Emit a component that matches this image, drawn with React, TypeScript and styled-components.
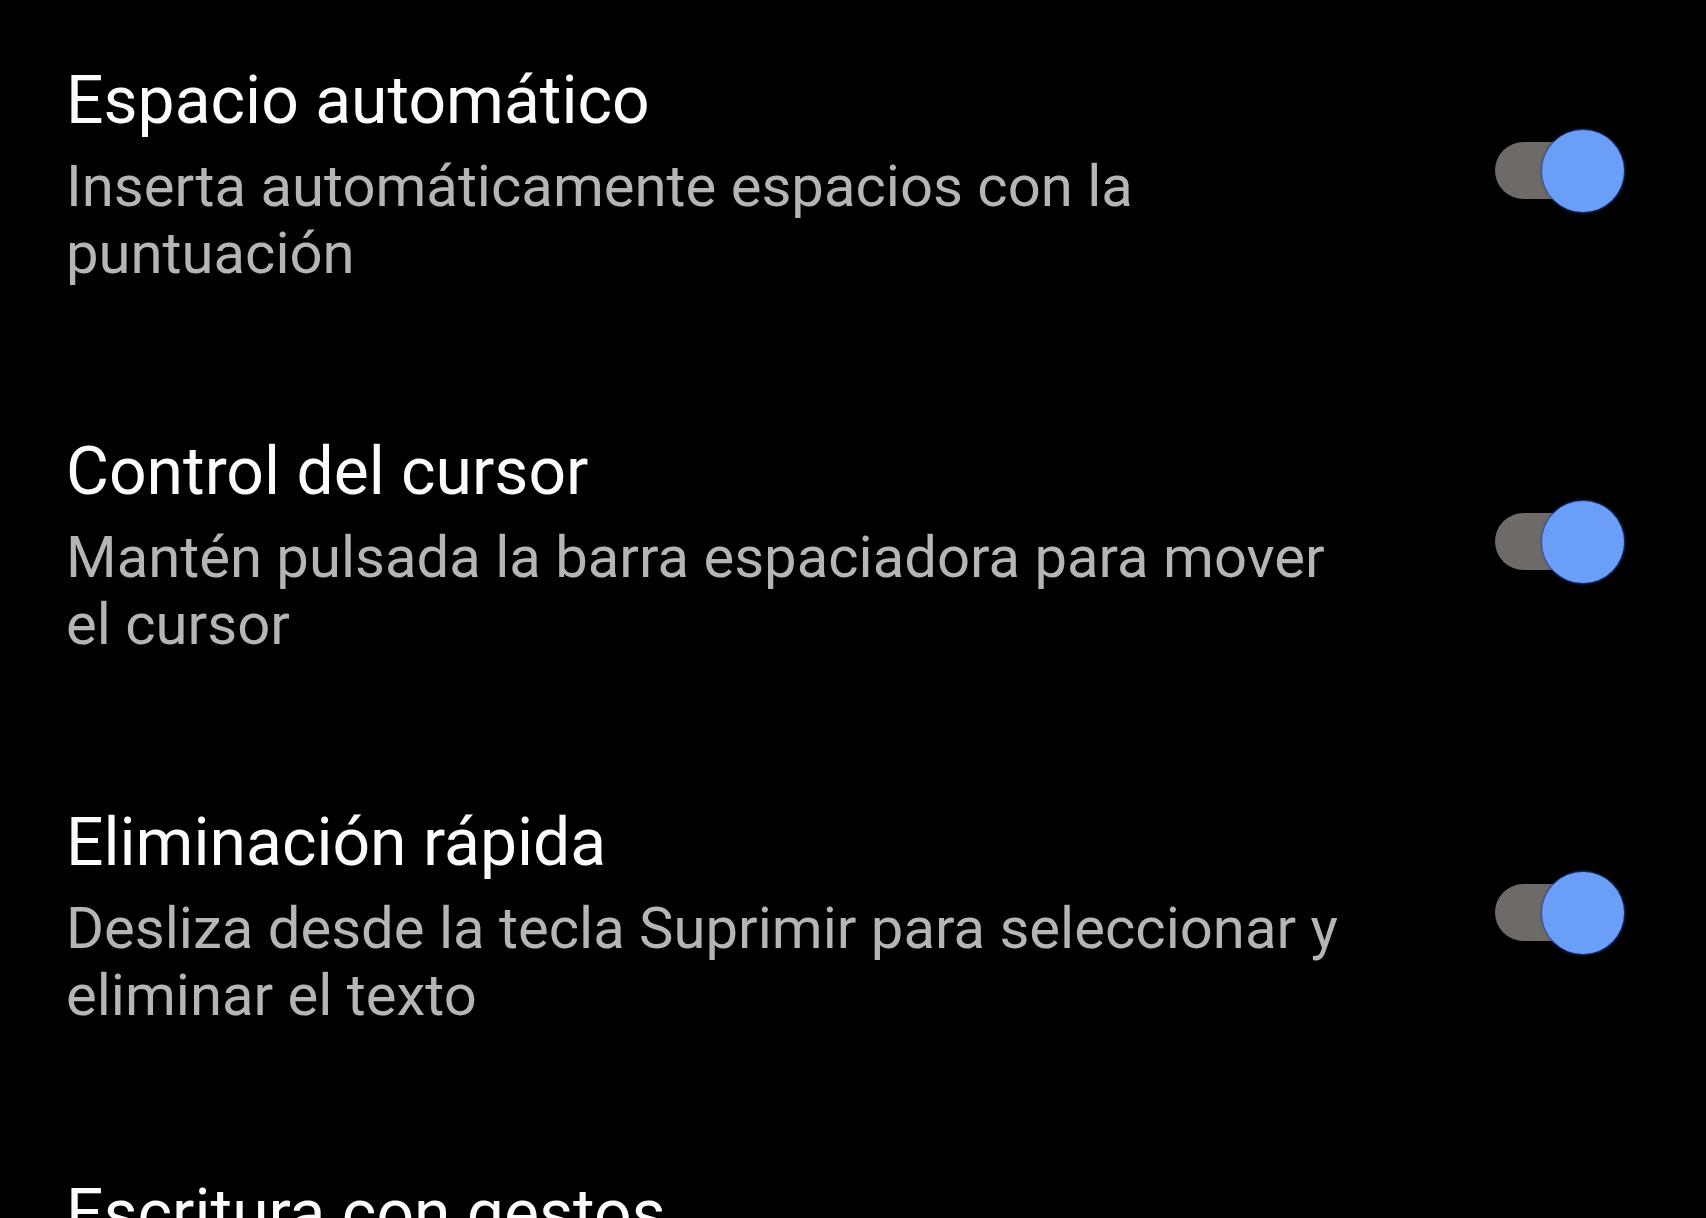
import React from "react";
import styled, { createGlobalStyle } from "styled-components";

const GlobalStyle = createGlobalStyle`
  html, body {
    margin: 0;
    padding: 0;
    background: #000;
  }
  body {
    font-family: Roboto, "Noto Sans", sans-serif;
    overflow: hidden;
  }
`;

const settings = [
  {
    title: "Espacio automático",
    desc: "Inserta automáticamente espacios con la puntuación",
    on: true,
  },
  {
    title: "Control del cursor",
    desc: "Mantén pulsada la barra espaciadora para mover el cursor",
    on: true,
  },
  {
    title: "Eliminación rápida",
    desc: "Desliza desde la tecla Suprimir para seleccionar y eliminar el texto",
    on: true,
  },
  {
    title: "Escritura con gestos",
    desc: "Desliza el dedo por las letras para escribir",
    on: true,
  },
];

export default function App() {
  return (
    <>
      <GlobalStyle />
      <Screen>
        {settings.map((s) => (
          <Row key={s.title}>
            <TextBlock>
              <Title>{s.title}</Title>
              <Desc>{s.desc}</Desc>
            </TextBlock>
            <Switch $on={s.on}>
              <Knob $on={s.on} />
            </Switch>
          </Row>
        ))}
      </Screen>
    </>
  );
}

const Screen = styled.main`
  width: 1706px;
  height: 1218px;
  padding: 63px 0 0 66px;
  box-sizing: border-box;
  display: flex;
  flex-direction: column;
  gap: 147px;
  overflow: hidden;
`;

const Row = styled.section`
  display: flex;
  align-items: flex-start;
  flex-shrink: 0;
`;

const TextBlock = styled.div`
  width: 1305px;
  display: flex;
  flex-direction: column;
  gap: 14px;
`;

const Title = styled.h3`
  margin: 0;
  font-size: 66px;
  line-height: 76px;
  font-weight: 400;
  color: #fbfbfb;
`;

const Desc = styled.p`
  margin: 0;
  font-size: 58px;
  line-height: 67px;
  font-weight: 400;
  color: #b5b5b5;
`;

const Switch = styled.div<{ $on: boolean }>`
  position: relative;
  flex-shrink: 0;
  margin: 79px 0 0 124px;
  width: 112px;
  height: 57px;
  border-radius: 29px;
  background: ${(p) => (p.$on ? "#6d6a67" : "#555")};
`;

const Knob = styled.span<{ $on: boolean }>`
  position: absolute;
  top: -12px;
  left: ${(p) => (p.$on ? "47px" : "-14px")};
  width: 82px;
  height: 82px;
  border-radius: 50%;
  background: #6b9ef6;
  box-shadow: 0 0 2px 1px rgba(35, 70, 160, 0.9);
`;
